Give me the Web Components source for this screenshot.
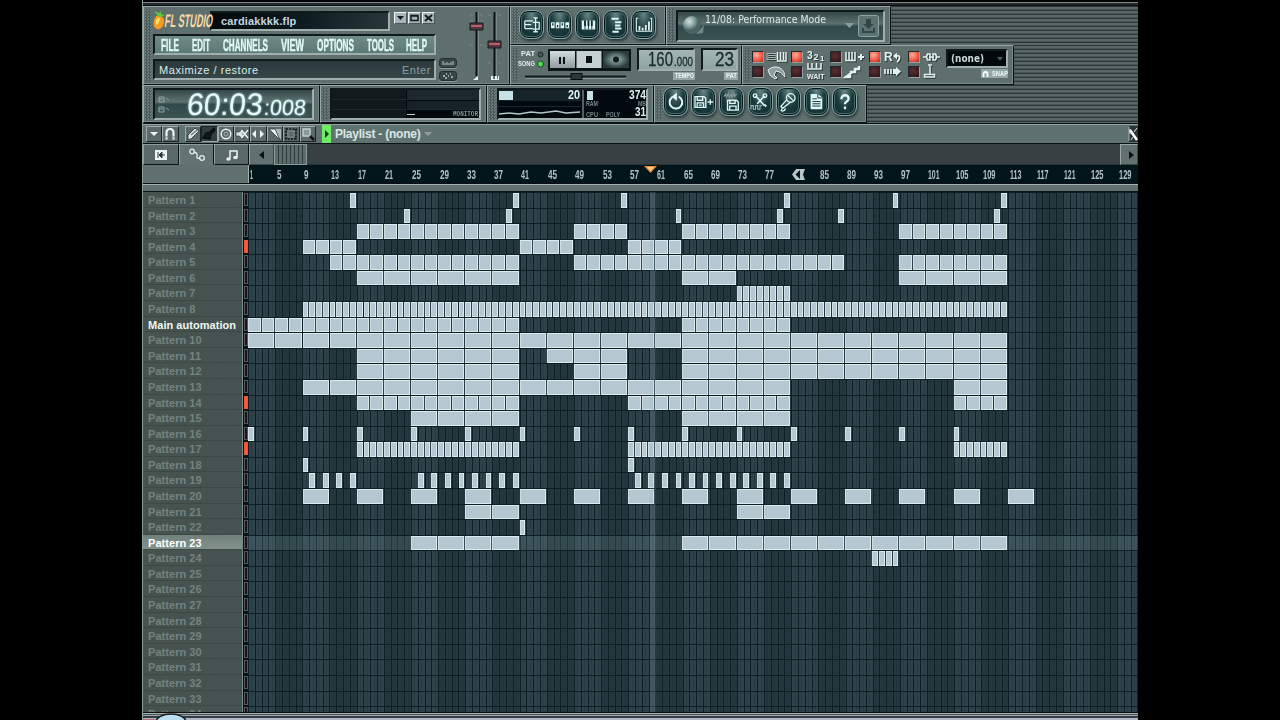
<!DOCTYPE html>
<html lang="en">
<head>
<meta charset="utf-8">
<title>FL Studio</title>
<style>
    body { margin: 0; background: #000; overflow: hidden; font-family: "Liberation Sans", Arial, sans-serif; }
</style>
</head>
<body>
<fl-studio></fl-studio>

<script>
// Text squeezed to an exact width, for the narrow display lettering
class FitText extends HTMLElement {
    constructor() {
        super();
        this.attachShadow({ mode: 'open' });
    }

    connectedCallback() {
        const w = parseFloat(this.getAttribute('w'));
        const size = parseFloat(this.getAttribute('size') || 12);
        const sy = parseFloat(this.getAttribute('sy') || 1);
        const h = Math.round(size * sy * 0.74);
        const skew = this.getAttribute('skew') || 0;
        this.shadowRoot.innerHTML = `
            <style>
                :host { display: block; flex: none; width: ${w}px; height: ${h}px; }
                span { display: block; width: max-content; font-size: ${size}px; line-height: ${h}px; white-space: pre; transform-origin: 0 50%; }
            </style>
            <span><slot></slot></span>
        `;
        const span = this.shadowRoot.querySelector('span');
        const natural = span.getBoundingClientRect().width || w;
        span.style.transform = `skewX(${-skew}deg) scale(${w / natural}, ${sy})`;
    }
}
customElements.define('fit-text', FitText);

// Raised metal section with a dotted grip on the left
class ToolPanel extends HTMLElement {
    constructor() {
        super();
        this.attachShadow({ mode: 'open' });
    }

    connectedCallback() {
        const w = this.getAttribute('w');
        this.shadowRoot.innerHTML = `
            <style>
                :host {
                    display: flex; flex: none; box-sizing: border-box; width: ${w}px; height: 100%;
                    background: #5f6f6e; border: 1px solid; border-color: #98a6a6 #0c1415 #0c1415 #98a6a6;
                    box-shadow: inset -1px -1px #78888a;
                }
                .grip {
                    flex: none; width: 7px; margin: 2px 1px;
                    background: repeating-conic-gradient(#4a5959 0 25%, #6b7b7a 0 50%) 0 0 / 3px 3px;
                }
                .body { flex: 1; min-width: 0; display: flex; }
            </style>
            <div class="grip"></div><div class="body"><slot></slot></div>
        `;
    }
}
customElements.define('tool-panel', ToolPanel);

class RoundButton extends HTMLElement {
    constructor() {
        super();
        this.attachShadow({ mode: 'open' });
    }

    connectedCallback() {
        this.shadowRoot.innerHTML = `
            <style>
                :host {
                    display: flex; flex: none; align-items: center; justify-content: center; box-sizing: border-box;
                    width: 25px; height: 29px; border-radius: 9px; border: 1px solid #8aa3a2;
                    background: radial-gradient(ellipse at 50% 8%, #6b8987 0, #1b3a3d 50%, #08292c 100%);
                    box-shadow: inset 0 0 0 1px #04191b, inset 0 0 0 2px #456766, 1px 2px 3px #26373a;
                }
                svg { width: 18px; height: 18px; display: block; overflow: visible; fill: none; stroke: #def6f4; stroke-width: 1.5; }
            </style>
            <svg viewBox="0 0 20 20">${ICONS[this.getAttribute('icon')]}</svg>
        `;
    }
}

const ICONS = {
    playlist: '<path d="M2 5.500h9M2 9.500h7M2 14h9M2 5.500V14M14 2v15M11.500 2h5M11.500 17.500h5M11 7h7v7.500h-7" stroke-width="1.400"/>',
    steps: '<path d="M0 7h4v6.500H0zM5.300 7h4v6.500h-4zM10.600 7h4v6.500h-4zM16 7h4v6.500h-4z" fill="#def6f4" stroke="none"/><path d="M2 8v2.500M7.300 10v2.500M12.600 8v2.500M18 10v2.500" stroke="#19383b" stroke-width="1.500"/>',
    piano: '<path d="M3 5h15v10H3z" fill="#def6f4" stroke="none"/><path d="M6.700 5v10M10.500 5v10M14.200 5v10" stroke="#12292c" stroke-width="1"/><path d="M6.700 5v6M10.500 5v6M14.200 5v6" stroke="#12292c" stroke-width="2"/>',
    browser: '<path d="M5 3h8M9 7h7M9 10.500h6M9 14h7M6 17.500h7" stroke-width="2.200"/>',
    mixer: '<path d="M3.500 2.500H1.500V17h17V2.500h-2" stroke-width="1.200"/><path d="M5 11v5M8.500 13v3M12 10v6M15.500 6v10" stroke-width="2"/>',
    undo: '<path d="M6 4.500A7 7 0 1 0 13 4" stroke-width="2.200"/><path d="M11 -.5v9L5 4.200z" fill="#def6f4" stroke="none"/>',
    save: '<path d="M0 4h10l2 2v10H0zM2.500 4v4h6V4M2.500 16v-5h7v5M14 10h6M17 7v6"/><path d="M4.500 13.500h3"/>',
    render: '<path d="M1 4l2-3 1 4 2-5 1 5 2-4 1 4 2-5 1 4 2-3" stroke="#829b9a" stroke-width="1.200"/><path d="M5 8h10l2 2v9H5zM7.500 8v3.500h6V8M7.500 19v-4.500h7V19"/>',
    edit: '<path d="M5 3l10 11M15 3L7 12" stroke-width="1.800"/><circle cx="4.500" cy="3" r="2"/><circle cx="15.500" cy="3" r="2"/><path d="M15 13l2 2" stroke-width="2"/><path d="M0 18v-4h2.500v4H5v-4h2.500v4H10v-4h2" stroke="#a0b5b4" stroke-width="1.200"/>',
    mic: '<circle cx="13" cy="5.500" r="4.800"/><path d="M9 7l-7 8 2 2 9-7M4 17q-3 3 0 3t3-3M9.500 2.500l7 6.500" stroke-width="1.400"/>',
    notes: '<path d="M4 1h8l5 4v13H4z" fill="#def6f4" stroke="none"/><path d="M6 6.500h5M6 9.500h9M6 12h9M6 14.500h9M12 1v4.500h4.500" stroke="#19383b" stroke-width="1.100"/>',
    help: '<path d="M6 7q0-4.500 4-4.500t4 3.700Q14 8.500 11.500 9.800 10 10.700 10 12.500M10 15v3" stroke-width="2.600"/>'
};
customElements.define('round-button', RoundButton);

// Sunken dark or glassy display
class LcdBox extends HTMLElement {
    constructor() {
        super();
        this.attachShadow({ mode: 'open' });
    }

    connectedCallback() {
        const bg = {
            glass: 'linear-gradient(#35494b 0, #5d7170 42%, #31494b 52%, #3c5353 100%)',
            dark: 'linear-gradient(90deg, #04090b, #0d1a20 50%, #28363a)',
            menu: 'linear-gradient(#6f8a88, #5a7a77)',
            hint: 'linear-gradient(#2c393c, #354548)',
            lcd: 'linear-gradient(#a3b6b5, #8fa5a3)',
            black: '#020a0f'
        }[this.getAttribute('kind')];
        this.shadowRoot.innerHTML = `
            <style>
                :host {
                    display: flex; flex: none; box-sizing: border-box;
                    width: ${this.getAttribute('w')}px; height: ${this.getAttribute('h')}px;
                    background: ${bg}; border: 2px solid; border-color: #101a1d #a0afae #a0afae #101a1d;
                }
            </style>
            <slot></slot>
        `;
    }
}
customElements.define('lcd-box', LcdBox);

class RecSwitch extends HTMLElement {
    constructor() {
        super();
        this.attachShadow({ mode: 'open' });
    }

    connectedCallback() {
        const on = this.hasAttribute('on');
        this.shadowRoot.innerHTML = `
            <style>
                :host { display: flex; align-items: center; gap: 3px; width: 39px; height: 15px; flex: none; }
                i {
                    width: 12px; height: 12px; box-sizing: border-box; flex: none;
                    border: 1px solid; border-color: #20292a #93a2a1 #93a2a1 #20292a;
                    background: ${on ? 'radial-gradient(circle at 35% 30%, #ffb09a, #ee5343 60%, #a42a20)' : 'radial-gradient(circle at 40% 35%, #5b2f32, #2a1416)'};
                }
                svg { display: block; width: 20px; height: 14px; fill: none; stroke: #e5f1ef; stroke-width: 1.500; overflow: visible; filter: drop-shadow(1px 1px 0 #2e3b3c); }
                text { font: bold 10px "Liberation Sans", sans-serif; fill: #e5f1ef; stroke: none; }
            </style>
            <i></i><svg viewBox="0 0 20 14">${SWITCH_ICONS[this.getAttribute('icon')]}</svg>
        `;
    }
}

const SWITCH_ICONS = {
    keys: '<path d="M0 3.500h9v6H0zM1 5.500h7M1 7.500h7" stroke="#a9b8b6" stroke-width="1"/><path d="M10.500 2v9H19V2M13.500 2v8M16.500 2v8"/>',
    count: '<text x="1" y="9">3</text><text x="7.500" y="10" style="font-size:9px">2</text><text x="14" y="11" style="font-size:8px">1</text>',
    blend: '<path d="M1 2v8.500h9V2M4 2v8M7 2v8" /><path d="M16 4v6M13 7h6" stroke-width="2"/>',
    loop: '<text x="0" y="11" style="font-size:12px">R</text><path d="M9 6l4-3.500v7z" fill="#e5f1ef" stroke="none"/><path d="M12 6q4-1 3.500 2T13 12" stroke-width="1.800"/>',
    link: '<path d="M7 4H4.500q-2 3 0 6H7zM10 4h2.500q2 3 0 6H10zM0 7h3M6 7h5M14 7h3"/>',
    knock: '<path d="M1 5q6-5 12-2 5 3 5 9-4-6-9-6l-2 4 3 3-2 1-5-4z" fill="#8d9e9c" stroke-width="1"/>',
    wait: '<path d="M2 -2v6h13v-6M6 -2v5M10.500 -2v5"/><text x="1" y="14" style="font-size:7px">WAIT</text>',
    note: '<path d="M1 12l4-3v3zM6 9V7h4V4h4V1" stroke-width="2.500"/>',
    arrow: '<path d="M1 4v5M4 4v5M7 4v5" stroke-width="1.700"/><path d="M9 4h3V2l5 4.500L12 11V9H9z" fill="#e5f1ef" stroke="none"/>',
    stick: '<path d="M7 1v8M1.500 9.500h10V12h-10zM5 0h4"/>'
};
customElements.define('rec-switch', RecSwitch);

// One small square tool of the playlist toolbar
class PlTool extends HTMLElement {
    constructor() {
        super();
        this.attachShadow({ mode: 'open' });
    }

    connectedCallback() {
        this.shadowRoot.innerHTML = `
            <style>
                :host {
                    display: block; flex: none; box-sizing: border-box; width: 16.4px; height: 16px;
                    border: 1px solid; border-color: #9eabaa #1a2425 #1a2425 #9eabaa; background: #5b6a69;
                }
                :host([active]) { background: #333d3e; border-color: #1a2425 #9eabaa #9eabaa #1a2425; }
                svg { display: block; width: 14px; height: 14px; fill: none; stroke: #eef4f3; stroke-width: 1.400; }
            </style>
            <svg viewBox="0 0 14 14">${PL_ICONS[this.getAttribute('icon')]}</svg>
        `;
    }
}

const PL_ICONS = {
    menu: '<path d="M3 5h8L7 9z" fill="#eef4f3" stroke="none"/>',
    magnet: '<path d="M3.500 12.500V6q0-4 3.500-4t3.500 4v6.500" stroke-width="2.200"/><path d="M1.500 10h3.500M9 10h3.500" stroke="#5b6a69" stroke-width=".8"/>',
    pencil: '<path d="M2 12.500V8l7-7 4 3-8 8z" fill="#dbe4e3" stroke="#222d2e" stroke-width=".8"/><path d="M5 8l6-5" stroke="#6a7877"/>',
    brush: '<path d="M1 11l3-5 4-1 4-4 1 2-4 4-1 5z" fill="#111a1b" stroke="#080e0e"/>',
    mute: '<circle cx="7" cy="7" r="4.800"/><circle cx="7" cy="7" r="2" stroke="#a0b0ae" stroke-width="1"/>',
    speaker: '<path d="M1 5h3l4-3v10L4 9H1z" fill="#dbe4e3" stroke="#222d2e" stroke-width=".6"/><path d="M6.500 3l6.500 8M13 3l-6.500 8"/>',
    slide: '<path d="M1 7l4-4v8zM13 7L9 3v8z" fill="#eef4f3" stroke="none"/>',
    slice: '<path d="M6 2h7v10h-2z" fill="#a9b8b6" stroke="none"/><path d="M1 2h6l5 11z" fill="#f0f6f5" stroke="#2b3536" stroke-width=".8"/>',
    select: '<path d="M2 2h10v10H2z" stroke="#0d1515" stroke-dasharray="2 1.300" stroke-width="1.700"/><path d="M4 4h6v6H4z" stroke="#8d9d9b" stroke-width=".7"/>',
    zoom: '<path d="M2 2h7v7H2z" fill="#87979a" stroke="#c5d1d0"/><path d="M9 9l4 4" stroke="#111" stroke-width="2.500"/>'
};
customElements.define('pl-tool', PlTool);

class TimeRuler extends HTMLElement {
    constructor() {
        super();
        this.attachShadow({ mode: 'open' });
    }

    connectedCallback() {
        let labels = '';
        for (let bar = 1; bar <= 129; bar += 4) {
            const n = String(bar);
            const ones = (n.match(/1/g) || []).length;
            const w = bar === 1 ? 3 : n.length * 4.5 - ones;
            labels += bar === 81
                ? '<div><svg width="14" height="11"><path d="M4 0h9l-2 5.500L13 11H4L0 5.500z" fill="#b9c6c8"/><path d="M8 1v9L3.500 5.500z" fill="#06161b"/></svg></div>'
                : `<div><fit-text w="${w}" size="11.500" sy="1.15">${n}</fit-text></div>`;
        }
        this.shadowRoot.innerHTML = `
            <style>
                :host { display: grid; grid-template-columns: repeat(33, 27.16px); align-items: center; flex: 1; overflow: hidden; background: #02151b; color: #b4c3c7; position: relative; font-weight: bold; }
                div { padding-left: .5px; }
                svg { display: block; margin-left: -1px; }
                .head { position: absolute; left: 395px; top: 0; margin: 0; }
            </style>
            ${labels}
            <svg class="head" width="14" height="8"><path d="M0 1h13L6.500 8z" fill="#f08a34"/><path d="M3 2h7L6.500 6z" fill="#ffd387"/></svg>
        `;
    }
}
customElements.define('time-ruler', TimeRuler);

class PatternRow extends HTMLElement {
    constructor() {
        super();
        this.attachShadow({ mode: 'open' });
    }

    connectedCallback() {
        const clips = JSON.parse(this.getAttribute('clips') || '[]');
        // each entry is [first bar, end bar, clip length, step]
        const cells = clips.map(([from, to, len, step]) => {
            let out = '';
            for (let bar = from; bar < to; bar += step || len) {
                out += `<b style="grid-column:${bar + 1} / span ${len}"></b>`;
            }
            return out;
        }).join('');
        this.shadowRoot.innerHTML = `
            <style>
                :host { display: flex; height: 15.58px; flex: none; }
                .name {
                    width: 100px; flex: none; box-sizing: border-box; padding-left: 5px; overflow: hidden; white-space: nowrap;
                    font: bold 11px/16px "Liberation Sans", sans-serif; letter-spacing: .05px; color: #75827f;
                    background: linear-gradient(90deg, #48534e, #465250); border-right: 1px solid #7b8888;
                    box-shadow: inset 0 -1px #3c4845;
                }
                :host([named]) .name { color: #eef8f5; }
                :host([selected]) .name { color: #fff; background: linear-gradient(#71817c, #83928d); }
                .led { width: 4px; height: 13px; margin: 1px 1px 0 1px; box-sizing: border-box; flex: none; border: 1px solid #59565a; background: #15181a; }
                :host([armed]) .led { background: #ff5a3c; border-color: #ee5537; }
                .cells {
                    flex: none; width: 890px; margin-left: -.7px; overflow: hidden; display: grid;
                    grid-template: 100% / repeat(131, 6.79px); box-shadow: inset 0 1px #0a1e24;
                }
                :host([selected]) .cells { background: #8ba6ad2e; }
                b { box-sizing: border-box; margin: 1px 1px 0 0; border: 1px solid #dcebee; border-left-color: #cfdee3; background: #b5c7d0; }
            </style>
            <div class="name"><slot></slot></div><div class="led"></div><div class="cells">${cells}</div>
        `;
    }
}
customElements.define('pattern-row', PatternRow);

const CLIPS = {
    1: [[15, 16, 1], [39, 40, 1], [55, 56, 1], [79, 80, 1], [95, 96, 1], [111, 112, 1]],
    2: [[23, 24, 1], [38, 39, 1], [63, 64, 1], [78, 79, 1], [87, 88, 1], [110, 111, 1]],
    3: [[16, 40, 2], [48, 56, 2], [64, 80, 2], [96, 112, 2]],
    4: [[8, 16, 2], [40, 48, 2], [56, 64, 2]],
    5: [[12, 40, 2], [48, 88, 2], [96, 112, 2]],
    6: [[16, 40, 4], [64, 72, 4], [96, 112, 4]],
    7: [[72, 80, 1]],
    8: [[8, 112, 1]],
    9: [[0, 40, 2], [64, 80, 2]],
    10: [[0, 112, 4]],
    11: [[16, 40, 4], [44, 56, 4], [64, 112, 4]],
    12: [[16, 40, 4], [48, 56, 4], [64, 112, 4]],
    13: [[8, 80, 4], [104, 112, 4]],
    14: [[16, 40, 2], [56, 80, 2], [104, 112, 2]],
    15: [[24, 40, 4], [64, 80, 4]],
    16: [[0, 112, 1, 8]],
    17: [[16, 40, 1], [56, 80, 1], [104, 112, 1]],
    18: [[8, 9, 1], [56, 57, 1]],
    19: [[9, 16, 1, 2], [25, 40, 1, 2], [57, 80, 1, 2]],
    20: [[8, 116, 4, 8]],
    21: [[32, 40, 4], [72, 80, 4]],
    22: [[40, 41, 1]],
    23: [[24, 40, 4], [64, 112, 4]],
    24: [[92, 96, 1]]
};

class PlaylistGrid extends HTMLElement {
    constructor() {
        super();
        this.attachShadow({ mode: 'open' });
    }

    connectedCallback() {
        let rows = '';
        for (let n = 1; n <= 34; n++) {
            const flags = (n === 9 ? ' named' : '') + (n === 23 ? ' selected' : '') + ([4, 14, 17].includes(n) ? ' armed' : '');
            rows += `<pattern-row${flags} clips="${JSON.stringify(CLIPS[n] || [])}">${n === 9 ? 'Main automation' : 'Pattern ' + n}</pattern-row>`;
        }
        this.shadowRoot.innerHTML = `
            <style>
                :host {
                    display: flex; flex-direction: column; height: 520px; overflow: hidden; position: relative;
                    background:
                        repeating-linear-gradient(90deg, #0a1f26 0 1px, #0000 1px 6.79px) 105px 0,
                        repeating-linear-gradient(90deg, #0000 0 3.400px, #17303766 3.400px 4.400px, #0000 4.400px 6.790px) 105px 0,
                        repeating-linear-gradient(90deg, #2f424a 0 27.16px, #24373c 27.16px 54.32px) 105px 0;
                    background-repeat: no-repeat;
                    background-color: #0b1214;
                }
                .playhead { position: absolute; left: 507px; top: 0; width: 6px; height: 100%; background: #9ab3bd33; }
            </style>
            ${rows}<div class="playhead"></div>
        `;
    }
}
customElements.define('playlist-grid', PlaylistGrid);

class FlStudio extends HTMLElement {
    constructor() {
        super();
        this.attachShadow({ mode: 'open' });
    }

    connectedCallback() {
        const tools = ['playlist', 'steps', 'piano', 'browser', 'mixer'].map(i => `<round-button icon="${i}"></round-button>`).join('');
        const shortcuts = ['undo', 'save', 'render', 'edit', 'mic', 'notes', 'help'].map(i => `<round-button icon="${i}"></round-button>`).join('');
        const plTools = ['pencil', 'brush', 'mute', 'speaker', 'slide', 'slice', 'select', 'zoom'].map(i => `<pl-tool icon="${i}"${i === 'brush' ? ' active' : ''}></pl-tool>`).join('');
        const menu = [['FILE', 18, 13], ['EDIT', 18, 13], ['CHANNELS', 45, 13], ['VIEW', 23, 13], ['OPTIONS', 37, 13], ['TOOLS', 27, 12], ['HELP', 21, 0]]
            .map(([t, w, gap]) => `<fit-text w="${w}" size="14" sy="1.2" style="margin-right:${gap}px">${t}</fit-text>`).join('');

        this.shadowRoot.innerHTML = `
            <style>
                :host { display: flex; flex-direction: column; box-sizing: border-box; width: 996px; height: 720px; margin-left: 142px; overflow: hidden; border-left: 1px solid #8d9a9a; background: #0a1011; }
                svg { display: block; flex: none; overflow: visible; }
                .strip { height: 6px; flex: none; background: linear-gradient(#020404 0 2px, #7d8889 2px 3px, #23292c 3px 5px, #0a0e0f 5px); }
                .main { display: flex; height: 79px; flex: none; }
                .side { flex: 1; min-width: 0; }
                .line { display: flex; }
                .rest { flex: 1; background: repeating-linear-gradient(#2c3639 0 1px, #5a6769 1px 3px, #465255 3px 4px); }
                .second { display: flex; height: 38px; flex: none; }
                .col { display: flex; flex-direction: column; }
                .title { display: flex; align-items: center; height: 19px; }
                .logo { color: #f6d9a4; font-weight: bold; }
                .file { color: #c3d6e0; font: bold 11px "Liberation Sans", sans-serif; align-self: center; margin-left: 9px; letter-spacing: .15px; }
                .wb { width: 13px; height: 12px; box-sizing: border-box; border: 1px solid; border-color: #eef5f4 #49575a #49575a #eef5f4; background: #a7b3b7; margin-right: 1px; }
                .hint { display: flex; flex: 1; justify-content: space-between; align-items: center; padding: 0 3px 0 4px; color: #d9eceb; font-size: 11px; letter-spacing: .55px; }
                .hint span + span { color: #8d9d9e; }
                .mini { width: 18px; height: 10px; border-radius: 3px; background: #394648; box-sizing: border-box; border: 1px solid #26302f; box-shadow: 0 1px #8b9b9a; }
                .tag { display: flex; align-items: center; justify-content: center; background: #94a6a5; color: #eefaf8; height: 8px; font-weight: bold; }
                .digits { color: #e3fbfa; filter: drop-shadow(0 0 1px #a9d0d0); }
                .readout { align-items: flex-end; color: #1b2b2d; -webkit-text-stroke: .3px #1b2b2d; }
                .pbar { display: flex; align-items: center; height: 20px; flex: none; box-sizing: border-box; border-top: 1px solid #96a4a3; border-bottom: 1px solid #0d1415; background: #607270; margin-top: 1px; padding-left: 3px; }
                .caption { font: bold 12px "Liberation Sans", sans-serif; color: #dbe8e6; margin-left: 3px; letter-spacing: -.22px; }
                .tabs { display: flex; height: 21px; flex: none; }
                .tab { width: 35px; box-sizing: border-box; display: flex; align-items: center; justify-content: center; background: #5a6968; border: 1px solid; border-color: #8f9e9d #0d1415 #0d1415 #8f9e9d; }
                .tab.on { background: #627372; border-bottom-color: #627372; }
                .btn { width: 25px; box-sizing: border-box; border: 1px solid; border-color: #9aa8a7 #39474a #39474a #9aa8a7; background: #61716f; display: flex; align-items: center; justify-content: center; }
                .thumb { width: 33px; box-sizing: border-box; border: 1px solid #8b9998; background: repeating-linear-gradient(90deg, #5c6c6b 0 3px, #2f3c3d 3px 4px); }
                .track { flex: 1; background: #394043; border-bottom: 1px solid #2b3335; }
                .ruler { display: flex; height: 18px; flex: none; }
                .corner { width: 106px; flex: none; background: #61716f; border-right: 1px solid #a5b2b1; box-sizing: border-box; }
                .band { height: 8px; flex: none; background: #61716f; border-top: 1px solid #a5b2b1; border-bottom: 1px solid #0d1415; box-sizing: border-box; margin-top: 1px; }
                .foot { flex: 1; background: linear-gradient(#0a0f10 0 1px, #a5aeb1 1px 2px, #4b5458 2px 3px, #9ca5aa 3px 4px, #333c42 4px 6px, #aeb7c6 6px); overflow: hidden; }
            </style>

            <div class="strip"></div>
            <div class="main">
                <tool-panel w="367">
                    <div class="col" style="width:283px;padding-top:4px">
                        <div class="title">
                            <svg width="12" height="19"><path d="M6 4q6 2 5 8-2 7-7 6-5-2-3-9 2-5 5-5z" fill="#f79a20"/><path d="M5 7q-3 2-2 7 3-1 4-7z" fill="#ffe46b"/><path d="M5 5L1 0l5 2 2-2v3l4 1-5 2z" fill="#5cc83a"/></svg>
                            <fit-text class="logo" w="48" size="13" sy="1.4" skew="8" style="margin-right:-3px;z-index:1">FL STUDIO</fit-text>
                            <lcd-box kind="dark" w="180" h="20"><span class="file">cardiakkkk.flp</span></lcd-box>
                            <div class="line" style="margin:-5px 0 0 4px">
                                <div class="wb"><svg width="11" height="10"><path d="M2 3h7L5.500 7z" fill="#111a1c"/></svg></div>
                                <div class="wb"><svg width="11" height="10"><path d="M2 2.500h7v5H2zM2 3h7" fill="none" stroke="#111a1c" stroke-width="1.500"/></svg></div>
                                <div class="wb"><svg width="11" height="10"><path d="M2 2l7 6M9 2L2 8" stroke="#111a1c" stroke-width="2"/></svg></div>
                            </div>
                        </div>
                        <lcd-box kind="menu" w="283" h="21" style="margin-top:4px">
                            <div class="line" style="align-items:center;padding-left:6px;color:#e2f8f4;font-weight:bold;-webkit-text-stroke:.4px">${menu}</div>
                        </lcd-box>
                        <lcd-box kind="hint" w="283" h="21" style="margin-top:4px"><div class="hint"><span>Maximize / restore</span><span>Enter</span></div></lcd-box>
                    </div>
                    <div class="col" style="gap:3px;margin:51px 0 0 3px">
                        <div class="mini"><svg width="16" height="8"><path d="M3 2v4M5 4v2M7 3v3M9 4v2M11 3v3M13 2v4" stroke="#b9c8c6"/></svg></div>
                        <div class="mini"><svg width="16" height="8"><path d="M3 4h2M6 2h1M10 2h1M8 4h1M11 5h2M5 6h2" stroke="#b9c8c6" stroke-width="1.500"/></svg></div>
                    </div>
                    <svg width="46" height="76" style="margin-left:8px">
                        <path d="M5 8h3M15 8h3M5 14h3M15 14h3M23 8h3M33 8h3M5 38h3M15 38h3M23 56h3M33 56h3" stroke="#788886"/><path d="M13 5v64M31 5v64" stroke="#94a3a2"/>
                        <path d="M11.500 5v64M29.500 5v64" stroke="#0a1011" stroke-width="2"/>
                        <g stroke="#151c1e"><path d="M5 16h13v7H5zM23 34h13v7H23z" fill="#52363d"/></g>
                        <path d="M6 19h11M24 37h11" stroke="#bd5d68" stroke-width="2"/>
                        <path d="M8 73l5-4v4zM26 69h2v3h2v-3h2v3h1v-3h1v4h-8z" fill="#eaf5f3"/>
                    </svg>
                </tool-panel>
                <div class="side">
                    <div class="line" style="height:39px">
                        <tool-panel w="156"><div class="line" style="gap:3px;padding:3px 0 0;margin-left:-1px">${tools}</div></tool-panel>
                        <tool-panel w="225">
                            <lcd-box kind="glass" w="209" h="32" style="margin-top:3px">
                                <svg width="25" height="28" style="margin-left:3px"><defs><radialGradient id="ball" cx=".35" cy=".3"><stop offset="0" stop-color="#d5e2e0"/><stop offset=".6" stop-color="#86a09e"/><stop offset="1" stop-color="#486462"/></radialGradient></defs><path d="M15 22l7-1 1-8z" fill="#6e8785"/><circle cx="11" cy="13" r="9" fill="url(#ball)"/></svg>
                                <fit-text w="121" size="11" style="margin-top:4px;margin-left:-1px;color:#dcebe9;font-family:'DejaVu Sans',sans-serif">11/08: Performance Mode</fit-text>
                                <svg width="56" height="28"><path d="M19 11h9l-4.500 5z" fill="#8ba09e"/><rect x="32.500" y="3.500" width="20" height="21" rx="2" fill="#5c7371" stroke="#8ca3a0"/><path d="M40 7h5v5h3l-5.500 5-5.500-5h3zM36 16v5h13v-5h-2v3H38v-3z" fill="#314747"/></svg>
                            </lcd-box>
                        </tool-panel>
                        <div class="rest"></div>
                    </div>
                    <div class="line" style="height:40px">
                        <tool-panel w="232">
                            <div class="col" style="width:118px">
                                <div class="line" style="padding-top:3px">
                                    <div class="col" style="width:17px;align-items:flex-end;gap:4px;padding-top:2px;margin-left:-2px;margin-right:2px;color:#e4efec;font-weight:bold">
                                        <fit-text w="14" size="8">PAT</fit-text><fit-text w="17" size="8">SONG</fit-text>
                                    </div>
                                    <svg width="11" height="22"><circle cx="3.500" cy="5.500" r="2.500" fill="#455553" stroke="#1f2b2a"/><circle cx="3.500" cy="15" r="3" fill="#4ae04a" stroke="#1c4b1f"/></svg>
                                    <svg width="83" height="22"><defs><linearGradient id="key" y2="1" x2="0"><stop stop-color="#d3dddd"/><stop offset="1" stop-color="#8f9d9e"/></linearGradient><radialGradient id="rec"><stop offset=".2" stop-color="#8aa3a2"/><stop offset="1" stop-color="#293b3d"/></radialGradient></defs><rect width="83" height="22" fill="#0c1415"/><rect x="2" y="2" width="25" height="17" fill="url(#key)"/><rect x="28.500" y="2" width="25" height="17" fill="#c4d0d1"/><rect x="55" y="2" width="26" height="17" fill="url(#rec)"/><path d="M12 8v7M16 8v7" stroke="#0b1213" stroke-width="2"/><path d="M38 7h6v7h-6z" fill="#0b1213"/><circle cx="68" cy="10.500" r="3" fill="#0f1b1c"/></svg>
                                </div>
                                <svg width="118" height="12"><path d="M5 5.500h101" stroke="#141d1e" stroke-width="2"/><path d="M5 7.500h101" stroke="#8b9998"/><rect x="51" y="2.500" width="11" height="6" fill="#2b3738" stroke="#080d0d"/></svg>
                            </div>
                            <div class="col" style="margin:2px 0 0 -1px;align-items:flex-end;gap:1px">
                                <lcd-box kind="lcd" w="58" h="23"><div class="line readout" style="padding:0 0 2px 9px"><fit-text w="25" size="20">160</fit-text><fit-text w="19" size="13" style="margin-left:1px">.000</fit-text></div></lcd-box>
                                <div class="tag" style="width:22px"><fit-text w="19" size="8">TEMPO</fit-text></div>
                            </div>
                            <div class="col" style="margin:2px 0 0 6px;align-items:flex-end;gap:1px">
                                <lcd-box kind="lcd" w="37" h="23"><div class="line readout" style="padding:0 0 2px 12px"><fit-text w="19" size="20">23</fit-text></div></lcd-box>
                                <div class="tag" style="width:14px"><fit-text w="11" size="8">PAT</fit-text></div>
                            </div>
                        </tool-panel>
                        <tool-panel w="272">
                            <div class="line" style="width:195px;flex-wrap:wrap;align-content:flex-start;padding:3px 0 0;flex:none">
                                <rec-switch on icon="keys"></rec-switch><rec-switch on icon="count"></rec-switch><rec-switch icon="blend"></rec-switch><rec-switch on icon="loop"></rec-switch><rec-switch on icon="link"></rec-switch>
                                <rec-switch icon="knock"></rec-switch><rec-switch icon="wait"></rec-switch><rec-switch icon="note"></rec-switch><rec-switch icon="arrow"></rec-switch><rec-switch icon="stick"></rec-switch>
                            </div>
                            <div class="col" style="padding-top:3px;align-items:flex-end;gap:1px;margin-left:-1px">
                                <lcd-box kind="black" w="62" h="19"><div class="line" style="align-items:center;padding-left:3px;color:#c9d8d9;font-weight:bold"><fit-text w="33" size="10" style="font-family:'DejaVu Sans',sans-serif">(none)</fit-text><svg width="20" height="8"><path d="M13 2h6l-3 4z" fill="#4b5a5c"/></svg></div></lcd-box>
                                <div class="tag" style="width:27px;height:9px;gap:2px"><svg width="8" height="8"><path d="M1.500 7V4q0-2 2-2t2 2v3" fill="none" stroke="#fff" stroke-width="1.800"/></svg><fit-text w="16" size="8">SNAP</fit-text></div>
                            </div>
                        </tool-panel>
                        <div class="rest"></div>
                    </div>
                </div>
            </div>
            <div class="second">
                <tool-panel w="177">
                    <lcd-box kind="glass" w="161" h="32" style="margin-top:2px">
                        <svg width="32" height="28"><path d="M4 7h5v5H4zM4 9h4M11 8l3 2M4 17h5v5H4zM4 19h4M11 18l3 2" fill="none" stroke="#91a5a4"/></svg>
                        <div class="line digits" style="align-items:flex-end;padding-bottom:2px">
                            <fit-text w="76" size="31" skew="6">60:03</fit-text><fit-text w="42" size="22" skew="6" style="margin-left:1px">:008</fit-text>
                        </div>
                    </lcd-box>
                </tool-panel>
                <tool-panel w="167">
                    <lcd-box kind="black" w="151" h="32" style="margin-top:2px">
                        <svg width="147" height="28"><rect width="74" height="28" fill="#11191c"/><path d="M0 9.500h147M0 19.500h147" stroke="#1c2a2f"/><rect x="75" y="0" width="72" height="9" fill="#1c282d"/><rect x="75" y="11" width="72" height="8" fill="#162227"/><path d="M75 24.500h8" stroke="#bcd0d3"/></svg>
                        <fit-text w="25" size="7" style="align-self:flex-end;margin:0 0 1px -26px;color:#829395;font-family:'Liberation Mono',monospace;font-weight:bold">MONITOR</fit-text>
                    </lcd-box>
                </tool-panel>
                <tool-panel w="167">
                    <lcd-box kind="black" w="151" h="32" style="margin-top:2px">
                        <svg width="147" height="28"><rect width="82" height="11" fill="#162429"/><rect y="1" width="14" height="9" fill="#c7e2e4"/><rect x="83" width="2" height="28" fill="#526062"/><path d="M0 24l10-1 10 1 12-2 10 1 15-2 10 2 14-1" stroke="#b3c6ca" fill="none" stroke-width="1.300"/><path d="M0 16.500h82" stroke="#182a30"/><rect x="88" y="1" width="6" height="9" fill="#c7e2e4"/></svg>
                        <div class="line" style="margin-left:-78px;gap:6px;color:#e0f2f3;font-weight:bold">
                            <fit-text w="12" size="12" style="margin-top:1px">20</fit-text>
                            <div class="col" style="width:60px">
                                <div class="line" style="justify-content:flex-end;height:11px;padding-top:1px;box-sizing:border-box"><fit-text w="17" size="12">374</fit-text></div>
                                <div class="line" style="justify-content:space-between;height:6px;color:#74888b"><fit-text w="12" size="6.500">RAM</fit-text><fit-text w="8" size="6.500">MB</fit-text></div>
                                <div class="line" style="align-items:flex-end;height:10px;color:#74888b"><fit-text w="12" size="6.500">CPU</fit-text><fit-text w="14" size="6.500" style="margin-left:8px">POLY</fit-text><fit-text w="11" size="12" style="margin-left:auto;color:#e0f2f3">31</fit-text></div>
                            </div>
                        </div>
                    </lcd-box>
                </tool-panel>
                <tool-panel w="213"><div class="line" style="gap:3.200px;padding:1px 0 0;margin-left:-1px">${shortcuts}</div></tool-panel>
                <div class="rest"></div>
            </div>

            <div class="pbar">
                <pl-tool icon="menu"></pl-tool><pl-tool icon="magnet"></pl-tool>
                <div class="line" style="margin-left:6px">${plTools}</div>
                <svg width="10" height="18" style="margin-left:6px"><path d="M0 0h9v18H0z" fill="#6fec66"/><path d="M3 5v8l4-4z" fill="#123c14"/></svg>
                <span class="caption">Playlist - (none)</span>
                <svg width="14" height="8"><path d="M3 2h8L7 6z" fill="#8f9f9d"/></svg>
                <svg width="9" height="16" style="margin-left:auto"><path d="M0 0h9v16H0z" fill="#2c3536"/><path d="M0 1v14" stroke="#a5b2b1"/><path d="M1 4l7 10" fill="none" stroke="#fff" stroke-width="2.500"/><path d="M1 3v5M8 2L5 6M2 14l2-3" stroke="#dfe9e7"/></svg>
            </div>
            <div class="tabs">
                <div class="tab" style="width:36px"><svg width="14" height="12"><path d="M1 1h12v10H1z" fill="#eef5f3"/><path d="M4 3v6M5 6h6M5 6l3-3v6z" stroke="#2b3839" fill="#2b3839"/></svg></div>
                <div class="tab on"><svg width="18" height="14" fill="none" stroke="#e6f0ee" stroke-width="1.300"><circle cx="4" cy="3.500" r="2.300"/><circle cx="14" cy="10" r="2.300"/><path d="M6 4q4 1 3 4t3 2"/></svg></div>
                <div class="tab"><svg width="14" height="14"><path d="M5 10V3h7v6" fill="none" stroke="#e6f0ee" stroke-width="1.600"/><ellipse cx="3.500" cy="11" rx="2.300" ry="1.800" fill="#e6f0ee"/><ellipse cx="10.500" cy="9.500" rx="2.300" ry="1.800" fill="#e6f0ee"/></svg></div>
                <div class="btn"><svg width="6" height="8"><path d="M5 0v8L0 4z" fill="#0b1213"/></svg></div>
                <div class="thumb"></div>
                <div class="track"></div>
                <div class="btn" style="width:18px;padding-left:6px"><svg width="6" height="8"><path d="M0 0v8l5-4z" fill="#0b1213"/></svg></div>
            </div>
            <div class="ruler"><div class="corner"></div><time-ruler></time-ruler></div>
            <div class="band"></div>
            <playlist-grid></playlist-grid>
            <div class="foot"><svg width="60" height="8" style="margin-top:1px"><ellipse cx="28" cy="9" rx="15" ry="8" fill="#b9def0" stroke="#14191c" stroke-width="1.500"/><path d="M0 6h12v2H0z" fill="#bc6d72"/></svg></div>
        `;
    }
}
customElements.define('fl-studio', FlStudio);
</script>
</body>
</html>
